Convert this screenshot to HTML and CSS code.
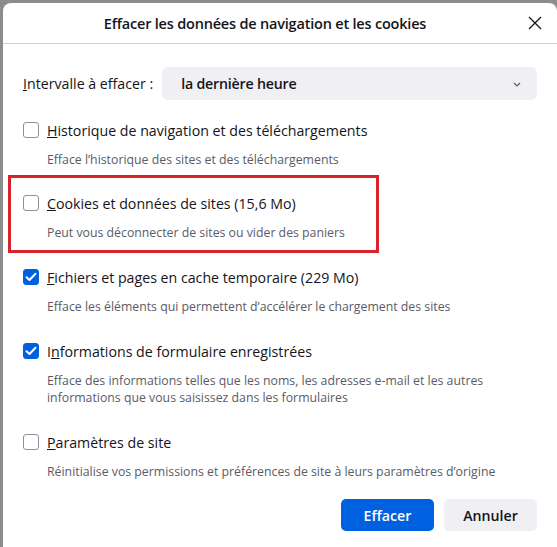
FILE: index.html
```html
<!DOCTYPE html>
<html lang="fr">
<head>
<meta charset="utf-8">
<link rel="stylesheet" href="styles.css">
</head>
<body>
<div class="dialog">
  <div class="header">
    <div class="title">Effacer les données de navigation et les cookies</div>
    <svg class="close" width="14" height="14" viewBox="0 0 14 14"><path d="M1 1L13 13M13 1L1 13" stroke="#15141a" stroke-width="1.3" fill="none"/></svg>
  </div>
  <div class="content">
    <div class="range">
      <span class="range-label"><u>I</u>ntervalle à effacer :</span>
      <div class="select">
        <span class="select-value">la dernière heure</span>
        <svg class="chev" width="8" height="5" viewBox="0 0 8 5"><path d="M1 1L4 4L7 1" stroke="#5b5b66" stroke-width="1.2" fill="none"/></svg>
      </div>
    </div>

    <div class="item">
      <div class="row"><span class="box"></span><span class="label"><u>H</u>istorique de navigation et des téléchargements</span></div>
      <div class="desc">Efface l’historique des sites et des téléchargements</div>
    </div>

    <div class="item highlight">
      <div class="row"><span class="box"></span><span class="label"><u>C</u>ookies et données de sites (15,6 Mo)</span></div>
      <div class="desc">Peut vous déconnecter de sites ou vider des paniers</div>
    </div>

    <div class="item">
      <div class="row"><span class="box checked"><svg width="12" height="10" viewBox="0 0 12 10"><path d="M1.5 5.2L4.5 8L10.5 1.8" stroke="#fff" stroke-width="2" fill="none" stroke-linecap="round" stroke-linejoin="round"/></svg></span><span class="label"><u>F</u>ichiers et pages en cache temporaire (229 Mo)</span></div>
      <div class="desc">Efface les éléments qui permettent d’accélérer le chargement des sites</div>
    </div>

    <div class="item">
      <div class="row"><span class="box checked"><svg width="12" height="10" viewBox="0 0 12 10"><path d="M1.5 5.2L4.5 8L10.5 1.8" stroke="#fff" stroke-width="2" fill="none" stroke-linecap="round" stroke-linejoin="round"/></svg></span><span class="label">I<u>n</u>formations de formulaire enregistrées</span></div>
      <div class="desc">Efface des informations telles que les noms, les adresses e-mail et les autres informations que vous saisissez dans les formulaires</div>
    </div>

    <div class="item">
      <div class="row"><span class="box"></span><span class="label"><u>P</u>aramètres de site</span></div>
      <div class="desc">Réinitialise vos permissions et préférences de site à leurs paramètres d’origine</div>
    </div>

    <div class="buttons">
      <button class="btn primary">Effacer</button>
      <button class="btn secondary">Annuler</button>
    </div>
  </div>
</div>
</body>
</html>
```

FILE: styles.css
```css
html, body {
  margin: 0;
  padding: 0;
  height: 100%;
}
body {
  background: #8c8c8c;
  font-family: "Open Sans", "Noto Sans", sans-serif;
  color: #15141a;
  overflow: hidden;
}
.dialog {
  margin: 3px 0 0 3px;
  height: 544px;
  background: #fff;
  border-radius: 8px 8px 0 0;
  box-sizing: border-box;
}
.header {
  position: relative;
  height: 40px;
  border-bottom: 1px solid #cfcfd8;
  display: flex;
  align-items: center;
  justify-content: center;
}
.title {
  font-size: 14.5px;
  font-weight: 600;
  letter-spacing: -0.2px;
  margin-right: 30px;
}
.close {
  position: absolute;
  right: 15px;
  top: 13px;
}
.content {
  padding: 23px 20px 0 20px;
}
.range {
  display: flex;
  align-items: center;
  gap: 9px;
}
.range-label {
  font-size: 14.2px;
}
.select {
  flex: 1;
  height: 33px;
  background: #f0f0f4;
  border-radius: 6px;
  display: flex;
  align-items: center;
  justify-content: space-between;
  padding: 0 16px 0 19px;
}
.select-value {
  font-size: 14.2px;
  font-weight: 600;
  letter-spacing: -0.2px;
}
.chev {
  margin-top: 1px;
}
.range + .item {
  margin-top: 21px;
}
.item + .item {
  margin-top: 27px;
}
.item.highlight {
  margin-top: 26px;
}
.row {
  display: flex;
  align-items: center;
  gap: 8px;
  height: 18px;
}
.box {
  width: 16px;
  height: 16px;
  box-sizing: border-box;
  border: 1px solid #8f8f9d;
  border-radius: 3px;
  display: flex;
  align-items: center;
  justify-content: center;
  flex-shrink: 0;
}
.box.checked {
  background: #0061e0;
  border-color: #0061e0;
}
.label {
  font-size: 14.2px;
}
.desc {
  margin: 12px 0 0 24px;
  font-size: 12.3px;
  line-height: 17px;
  color: #5b5b66;
}
.highlight {
  position: relative;
}
.highlight::before {
  content: "";
  position: absolute;
  left: -15px;
  top: -19px;
  width: 371px;
  height: 78px;
  box-sizing: border-box;
  border: 3px solid #d8232a;
}
.buttons {
  display: flex;
  justify-content: flex-end;
  gap: 10px;
  margin-top: 19px;
}
.btn {
  width: 93px;
  height: 32px;
  border: none;
  border-radius: 5px;
  font-family: inherit;
  font-size: 14.2px;
  font-weight: 600;
}
.btn.primary {
  background: #0061e0;
  color: #fff;
}
.btn.secondary {
  background: #f0f0f4;
  color: #15141a;
}
```
